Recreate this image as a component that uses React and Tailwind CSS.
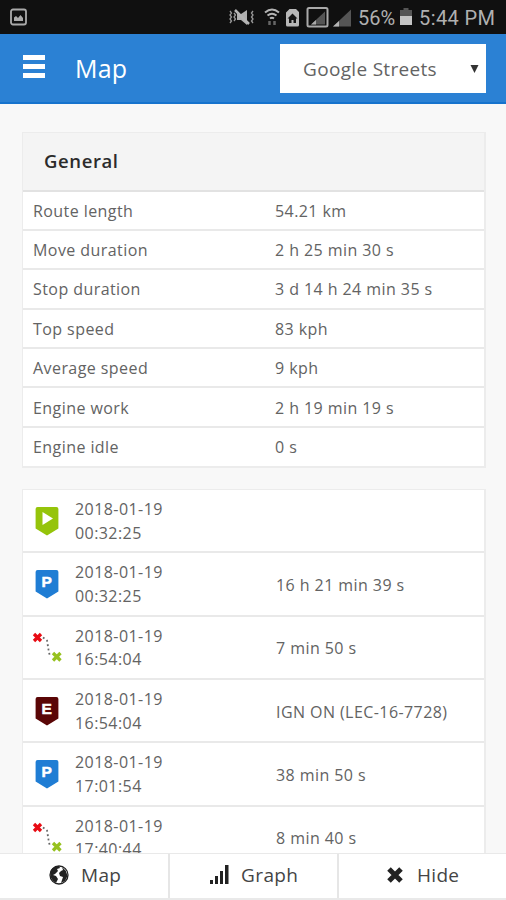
import React from "react";

const summary = [
  ["Route length", "54.21 km"],
  ["Move duration", "2 h 25 min 30 s"],
  ["Stop duration", "3 d 14 h 24 min 35 s"],
  ["Top speed", "83 kph"],
  ["Average speed", "9 kph"],
  ["Engine work", "2 h 19 min 19 s"],
  ["Engine idle", "0 s"],
];

const events = [
  ["play", "00:32:25", ""],
  ["P", "00:32:25", "16 h 21 min 39 s"],
  ["route", "16:54:04", "7 min 50 s"],
  ["E", "16:54:04", "IGN ON (LEC-16-7728)"],
  ["P", "17:01:54", "38 min 50 s"],
  ["route", "17:40:44", "8 min 40 s"],
];

function EventIcon({ kind }) {
  if (kind === "route") {
    return (
      <svg className="h-[34px] w-[32px]" viewBox="0 0 32 34" fill="none">
        <path d="M3 3l7 7M10 3l-7 7" stroke="#e80c14" strokeWidth="3.300" />
        <path d="M22 22l7.500 7.500M29.500 22l-7.500 7.500" stroke="#96c11f" strokeWidth="3.300" />
        <path d="M12 6.500l4 3 1.500 9 1.500 7.500" stroke="#666" strokeWidth="1.800" strokeDasharray="1.800 2.600" />
      </svg>
    );
  }
  const fill = kind === "play" ? "#95c40a" : kind === "P" ? "#1f7dd4" : "#5a0606";
  return (
    <svg className="h-[34px] w-[32px]" viewBox="0 0 32 34">
      <path d="M6.600 2h18.800a2 2 0 0 1 2 2v19.500L16 30.500 4.600 23.500V4a2 2 0 0 1 2-2z" fill={fill} />
      {kind === "play" ? (
        <path d="M11.500 7v13l10.500-6.500z" fill="#fff" />
      ) : (
        <text x="16" y="18.500" textAnchor="middle" fontFamily="Liberation Sans, sans-serif" fontWeight="700" fontSize="15.500" fill="#fff" stroke="#fff" strokeWidth="0.500">
          {kind}
        </text>
      )}
    </svg>
  );
}

function StatusIcons() {
  return (
    <svg className="h-[34px] w-[130px]" viewBox="226 0 130 34" fill="none">
      <path d="M230 11l1.500 2-1.500 2 1.500 2-1.500 2 1.500 2-1.500 2M234 13l1.500 2-1.500 2 1.500 2-1.500 2M253 11l-1.500 2 1.500 2-1.500 2 1.500 2-1.500 2 1.500 2" stroke="#999" strokeWidth="1.300" />
      <path d="M237 14h4l6-4v15l-6-5h-4z" fill="#b0b0b0" />
      <path d="M235 10l14 14" stroke="#b5b5b5" strokeWidth="2.500" />
      <path d="M265 12.500q7-6 14 0M267.500 15.500q4.500-3.500 9 0M270 18.500q2-1.500 4 0" stroke="#b5b5b5" strokeWidth="2" />
      <path d="M269.500 21v4M274.500 21v4" stroke="#666" strokeWidth="2.500" />
      <path d="M289.500 9h6.500l3 3v13a1.500 1.500 0 0 1-1.500 1.500h-10A1.500 1.500 0 0 1 286 25V12.500z" fill="#b8b8b8" />
      <path d="M292.500 13.500l5 5H296V23h-2.500v-3h-2v3H289v-4.500h-1.500z" fill="#151515" />
      <rect x="307.500" y="8" width="20" height="18.500" rx="1.500" stroke="#aaa" strokeWidth="2" />
      <path d="M311 24.500l14-13v13z" fill="#555" />
      <path d="M311 24.500l5-4.500v4.500z" fill="#aaa" />
      <path d="M333 26.500l18-17v17z" fill="#555" />
      <path d="M333 26.500l6-5.500v5.500z" fill="#b5b5b5" />
    </svg>
  );
}

export default function App() {
  return (
    <div className="flex h-[900px] w-[506px] flex-col overflow-hidden bg-[#f8f8f8] font-['Open_Sans',sans-serif] text-[#636363]">
      <div className="flex h-[34px] shrink-0 items-center bg-[#101010] text-[#b0b0b0]">
        <svg className="ml-[10px] h-[18px] w-[17px] shrink-0" viewBox="0 0 17 18" fill="none">
          <rect x="1" y="1.500" width="15" height="15" rx="2" stroke="#aaa" strokeWidth="1.800" />
          <path d="M4 13V9.500l2-1.500 2 2 2.500-3 2.500 3v3z" fill="#aaa" />
        </svg>
        <div className="ml-[199px] shrink-0"><StatusIcons /></div>
        <span className="ml-[2px] w-[42px] shrink-0 whitespace-nowrap pt-[1px] font-['Roboto',sans-serif] text-[20px] tracking-[0px]">56%</span>
        <svg className="h-[20px] w-[12px] shrink-0" viewBox="0 0 12 20">
          <path d="M3.500 1h5v2H12v6H0V3h3.500z" fill="#555" />
          <path d="M0 9h12v9H0z" fill="#c4c4c4" />
        </svg>
        <span className="ml-[7px] whitespace-nowrap pt-[1px] font-['Roboto',sans-serif] text-[20px] tracking-[0.400px]">5:44 PM</span>
      </div>
      <header className="flex h-[70px] shrink-0 items-center border-b-2 border-[#1673cd] bg-[#2b81d4] pl-[23px] pr-[20px]">
        <div className="flex w-[22px] flex-col gap-[4px] pb-[3px]">
          <div className="h-[5px] bg-white" />
          <div className="h-[5px] bg-white" />
          <div className="h-[5px] bg-white" />
        </div>
        <h1 className="ml-[30px] text-[25px] leading-[34px] tracking-[0.200px] text-white">Map</h1>
        <div className="ml-auto flex h-[49px] w-[206px] items-center justify-between bg-white pl-[23px] pr-[7px]">
          <span className="pt-[2px] text-[19px] tracking-[0.320px]">Google Streets</span>
          <svg className="mt-[1px] h-[8px] w-[9px]" viewBox="0 0 9 8"><path d="M0.500 0h8l-4 8z" fill="#333" /></svg>
        </div>
      </header>
      <main className="flex min-h-0 flex-1 flex-col gap-[21px] overflow-hidden pl-[22px] pr-[20px] pt-[28px]">
        <section className="shrink-0 border-2 border-l border-t border-[#ececec] bg-white">
          <h2 className="flex h-[58.500px] items-center border-b-2 border-[#e2e2e2] bg-[#f4f4f4] pb-[1px] pl-[21px] text-[18.500px] font-semibold tracking-[0.600px] text-[#2b2b2b]">General</h2>
          {summary.map(([label, value]) => (
            <div key={label} className="flex h-[39.400px] items-center border-b-2 border-[#e9e9e9] pl-[10px] pt-[1px] text-[16px] tracking-[0.430px] last:h-[38px] last:border-b-0">
              <span className="w-[242px]">{label}</span>
              <span>{value}</span>
            </div>
          ))}
        </section>
        <section className="shrink-0 border-2 border-l border-t border-[#ececec] bg-white">
          {events.map(([kind, time, value], i) => (
            <div key={i} className="flex h-[63.400px] items-center border-b-2 border-[#e9e9e9] pl-[8px] pt-[2px] text-[16px] tracking-[0.430px]">
              <EventIcon kind={kind} />
              <div className="ml-[12px] w-[201px] leading-[23.700px]">
                <div>2018-01-19</div>
                <div>{time}</div>
              </div>
              <span>{value}</span>
            </div>
          ))}
        </section>
      </main>
      <nav className="grid h-[47px] shrink-0 grid-cols-[170px_169px_1fr] border-b-2 border-t border-[#e9e9e9] bg-white text-[19px] tracking-[0.300px] text-[#444]">
        <div className="flex items-center border-r-2 border-[#e6e6e6] pl-[49px]">
          <svg className="mb-[3px] h-[20px] w-[20px]" viewBox="0 0 20 20">
            <circle cx="10" cy="10" r="9" fill="#fff" stroke="#222" strokeWidth="1.300" />
            <path d="M2 5Q5 1 10 1l1 2-3 1 1 2-3 3-2 1 3 1 2 3-2 4-3-2-2.500-4Q.5 8 2 5zM13 2l4 4 1.500 5-2.500 5-4 2 1-3 1-3-3-1-1-3 2-2 2-1z" fill="#222" />
          </svg>
          <span className="ml-[12px] pb-[2px]">Map</span>
        </div>
        <div className="flex items-center border-r-2 border-[#e6e6e6] pl-[40px]">
          <svg className="mb-[3px] h-[20px] w-[20px]" viewBox="0 0 20 20" fill="#222"><path d="M0 15h3v4H0zM5 11h3v8H5zM10 6h3v13h-3zM15 0h3.500v19H15z" /></svg>
          <span className="ml-[11px] pb-[2px] tracking-[0.400px]">Graph</span>
        </div>
        <div className="flex items-center pl-[46px]">
          <svg className="mb-[3px] h-[18px] w-[20px]" viewBox="0 0 20 18"><path d="M4 3l12 12M16 3L4 15" stroke="#222" strokeWidth="5" /></svg>
          <span className="ml-[12px] pb-[2px]">Hide</span>
        </div>
      </nav>
    </div>
  );
}
